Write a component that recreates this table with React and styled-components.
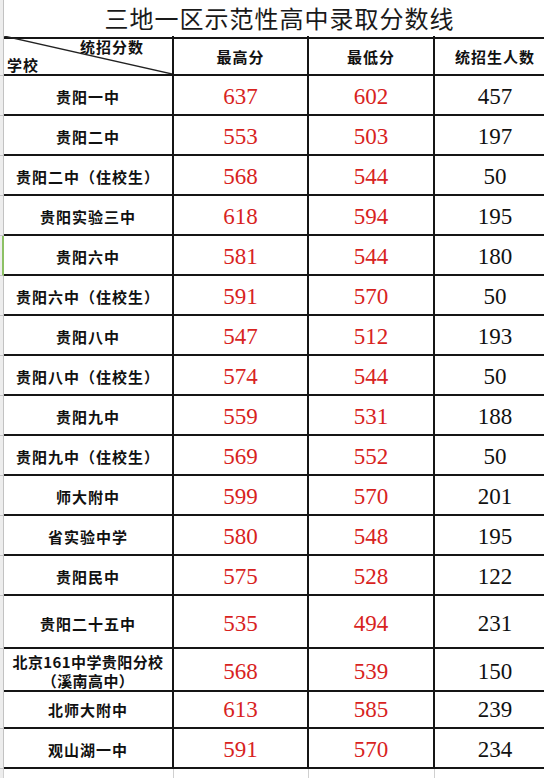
import React from 'react';
import styled, { createGlobalStyle } from 'styled-components';

const GlobalStyle = createGlobalStyle`
  html, body {
    margin: 0;
    padding: 0;
    background: #fff;
    overflow: hidden;
  }
  body {
    font-family: "Noto Sans CJK SC", sans-serif;
    color: #111;
  }
`;

const COLS = '4px 170px 135px 126px 120px';

const Sheet = styled.div`
  width: 555px;
`;

const Row = styled.div`
  display: grid;
  grid-template-columns: ${COLS};
  height: ${p => p.$h || 40}px;
`;

const TitleRow = styled.div`
  display: grid;
  grid-template-columns: 4px 1fr;
  height: 36px;
`;

const Gutter = styled.div`
  background: #ededed;
  box-sizing: border-box;
  border-right: ${p => (p.$active ? '2px solid #8cc064' : '1px solid #c2c2c2')};
  border-bottom: 1px solid #c4c4c4;
`;

const Cell = styled.div`
  box-sizing: border-box;
  display: flex;
  align-items: center;
  justify-content: center;
  text-align: center;
  border-bottom: 2px solid #151515;
  border-right: ${p => (p.$last ? 'none' : '2px solid #151515')};
  padding-top: 2px;
`;

const Title = styled(Cell)`
  font-size: 24px;
  font-weight: 400;
  letter-spacing: 1px;
  color: #1a1a1a;
  padding-top: 0;
  padding-bottom: 2px;
`;

const HeadLabel = styled(Cell)`
  font-size: 15px;
  font-weight: 700;
  letter-spacing: 1px;
`;

const Corner = styled.div`
  position: relative;
  box-sizing: border-box;
  border-bottom: 2px solid #151515;
  border-right: 2px solid #151515;
  display: flex;
  flex-direction: column;
  justify-content: space-between;
  padding: 2px 28px 0 3px;
  font-size: 15px;
  font-weight: 700;
  letter-spacing: 1px;
`;

const Diagonal = styled.svg`
  position: absolute;
  inset: 0;
  width: 100%;
  height: 100%;
`;

const CornerTop = styled.span`
  align-self: flex-end;
  line-height: 18px;
`;

const CornerBottom = styled.span`
  align-self: flex-start;
  line-height: 18px;
`;

const School = styled(Cell)`
  font-size: 15px;
  font-weight: 700;
  letter-spacing: ${p => (p.$tight ? '0.4px' : '1px')};
  line-height: 19px;
  padding-top: 3px;
`;

const Score = styled(Cell)`
  font-family: "Liberation Serif", serif;
  font-size: 23px;
  color: ${p => (p.$red ? '#d8231e' : '#111')};
  padding-top: 4px;
`;

const Filler = styled.div`
  display: grid;
  grid-template-columns: ${COLS};
  height: 12px;
`;

const GridCell = styled.div`
  box-sizing: border-box;
  border-right: ${p => (p.$last ? 'none' : '1px solid #d0d0d0')};
  border-bottom: 1px solid #dcdcdc;
  background: ${p => (p.$gutter ? '#ededed' : '#fff')};
`;

const rows = [
  ['贵阳一中', 637, 602, 457],
  ['贵阳二中', 553, 503, 197],
  ['贵阳二中（住校生）', 568, 544, 50],
  ['贵阳实验三中', 618, 594, 195],
  ['贵阳六中', 581, 544, 180, true],
  ['贵阳六中（住校生）', 591, 570, 50],
  ['贵阳八中', 547, 512, 193],
  ['贵阳八中（住校生）', 574, 544, 50],
  ['贵阳九中', 559, 531, 188],
  ['贵阳九中（住校生）', 569, 552, 50],
  ['师大附中', 599, 570, 201],
  ['省实验中学', 580, 548, 195],
  ['贵阳民中', 575, 528, 122],
  ['贵阳二十五中', 535, 494, 231, false, 53],
  [['北京161中学贵阳分校', '（溪南高中）'], 568, 539, 150],
  ['北师大附中', 613, 585, 239],
  ['观山湖一中', 591, 570, 234],
];

export default function App() {
  return (
    <>
      <GlobalStyle />
      <Sheet>
        <TitleRow>
          <Gutter />
          <Title $last>三地一区示范性高中录取分数线</Title>
        </TitleRow>
        <Row>
          <Gutter />
          <Corner>
            <Diagonal viewBox="0 0 100 100" preserveAspectRatio="none">
              <line x1="0" y1="0" x2="100" y2="100" stroke="#222" strokeWidth="1.3" vectorEffect="non-scaling-stroke" />
            </Diagonal>
            <CornerTop>统招分数</CornerTop>
            <CornerBottom>学校</CornerBottom>
          </Corner>
          <HeadLabel>最高分</HeadLabel>
          <HeadLabel>最低分</HeadLabel>
          <HeadLabel $last>统招生人数</HeadLabel>
        </Row>
        {rows.map(([name, hi, lo, count, active, h], i) => (
          <Row key={i} $h={h}>
            <Gutter $active={active} />
            {Array.isArray(name) ? (
              <School $tight>
                {name[0]}
                <br />
                {name[1]}
              </School>
            ) : (
              <School>{name}</School>
            )}
            <Score $red>{hi}</Score>
            <Score $red>{lo}</Score>
            <Score $last>{count}</Score>
          </Row>
        ))}
        <Filler>
          <GridCell $gutter />
          <GridCell />
          <GridCell />
          <GridCell />
          <GridCell $last />
        </Filler>
      </Sheet>
    </>
  );
}
